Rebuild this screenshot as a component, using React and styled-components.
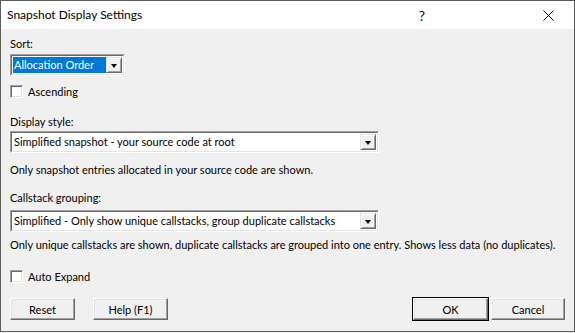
import React from "react";
import styled, { createGlobalStyle } from "styled-components";

const Global = createGlobalStyle`
  html, body { margin: 0; padding: 0; background: #f0f0f0; }
  body { font-family: Lato, "Noto Sans", sans-serif; }
`;

const Win = styled.div`
  width: 575px;
  height: 332px;
  box-sizing: border-box;
  border: 1px solid #5b5b5b;
  background: #f0f0f0;
  display: flex;
  flex-direction: column;
  font-family: Lato, "Noto Sans", sans-serif;
  font-size: 11px;
  color: #000;
`;

const TitleBar = styled.div`
  height: 28px;
  background: #fff;
  display: flex;
  align-items: center;
  padding-left: 6px;
  flex: none;
`;

const Title = styled.div`
  font-size: 12px;
  flex: 1;
  margin-top: -1px;
`;

const TitleBtn = styled.div`
  width: ${p => p.$w}px;
  margin-right: ${p => p.$mr || 0}px;
  height: 28px;
  display: flex;
  align-items: center;
  justify-content: center;
  font-size: 14px;
`;

const Body = styled.div`
  flex: 1;
  display: flex;
  flex-direction: column;
  padding: 0 9px;
`;

const Label = styled.div`
  height: 15px;
  line-height: 15px;
  margin-top: ${p => p.$mt}px;
  white-space: nowrap;
`;

const Combo = styled.div`
  margin-top: ${p => p.$mt}px;
  width: ${p => p.$w}px;
  height: 22px;
  box-sizing: border-box;
  border-top: 1px solid #a0a0a0;
  border-left: 1px solid #a0a0a0;
  border-right: 1px solid #fff;
  border-bottom: 1px solid #fff;
  display: flex;
`;

const ComboInner = styled.div`
  flex: 1;
  display: flex;
  border-top: 1px solid #696969;
  border-left: 1px solid #696969;
  border-right: 1px solid #e3e3e3;
  border-bottom: 1px solid #e3e3e3;
  background: #fff;
  padding: 1px;
  min-width: 0;
`;

const ComboText = styled.div`
  flex: 1;
  line-height: 16px;
  padding-left: 1px;
  white-space: nowrap;
  overflow: hidden;
  background: ${p => (p.$sel ? "#0078d7" : "transparent")};
  color: ${p => (p.$sel ? "#fff" : "#000")};
`;

const ArrowBtn = styled.div`
  width: 16px;
  flex: none;
  box-sizing: border-box;
  background: #f0f0f0;
  border-top: 1px solid #e3e3e3;
  border-left: 1px solid #e3e3e3;
  border-right: 1px solid #696969;
  border-bottom: 1px solid #696969;
  box-shadow: inset 1px 1px 0 #fff, inset -1px -1px 0 #a0a0a0;
  display: flex;
  align-items: center;
  justify-content: center;
`;

const Tri = styled.div`
  width: 0;
  height: 0;
  border-left: 3.5px solid transparent;
  border-right: 3.5px solid transparent;
  border-top: 4px solid #000;
  margin-top: 1px;
`;

const CheckRow = styled.div`
  display: flex;
  align-items: center;
  gap: 5px;
  margin-top: ${p => p.$mt}px;
  height: 15px;
`;

const Box = styled.div`
  width: 13px;
  height: 13px;
  box-sizing: border-box;
  background: #fff;
  border: 1px solid;
  border-color: #a0a0a0 #fff #fff #a0a0a0;
  box-shadow: inset 1px 1px 0 #696969, inset -1px -1px 0 #e3e3e3;
`;

const ButtonRow = styled.div`
  display: flex;
  margin-top: ${p => p.$mt}px;
  align-items: flex-start;
`;

const Btn = styled.div`
  width: ${p => p.$w}px;
  height: 22px;
  box-sizing: border-box;
  margin-right: ${p => p.$mr || 0}px;
  background: #f0f0f0;
  border-top: 1px solid #fff;
  border-left: 1px solid #fff;
  border-right: 1px solid #696969;
  border-bottom: 1px solid #696969;
  box-shadow: inset -1px -1px 0 #a0a0a0, inset 1px 1px 0 #e3e3e3;
  outline: ${p => (p.$def ? "1px solid #000" : "none")};
  display: flex;
  align-items: center;
  justify-content: center;
  line-height: 15px;
`;

const Spacer = styled.div`
  flex: 1;
`;

function ComboBox({ w, mt, text, sel }) {
  return (
    <Combo $w={w} $mt={mt}>
      <ComboInner>
        <ComboText $sel={sel}>{text}</ComboText>
        <ArrowBtn>
          <Tri />
        </ArrowBtn>
      </ComboInner>
    </Combo>
  );
}

export default function App() {
  return (
    <>
      <Global />
      <Win>
        <TitleBar>
          <Title>Snapshot Display Settings</Title>
          <TitleBtn $w={30} $mr={96}>?</TitleBtn>
          <TitleBtn $w={30} $mr={11}>
            <svg width="11" height="11" viewBox="0 0 11 11">
              <path d="M0.5 0.5 L10.5 10.5 M10.5 0.5 L0.5 10.5" stroke="#000" strokeWidth="1" fill="none" />
            </svg>
          </TitleBtn>
        </TitleBar>
        <Body>
          <Label $mt={7}>Sort:</Label>
          <ComboBox w={115} mt={3} text="Allocation Order" sel />
          <CheckRow $mt={8}>
            <Box />
            <span>Ascending</span>
          </CheckRow>
          <Label $mt={15}>Display style:</Label>
          <ComboBox w={369} mt={2} text="Simplified snapshot - your source code at root" />
          <Label $mt={9}>Only snapshot entries allocated in your source code are shown.</Label>
          <Label $mt={13}>Callstack grouping:</Label>
          <ComboBox w={369} mt={5} text="Simplified - Only show unique callstacks, group duplicate callstacks" />
          <Label $mt={5}>Only unique callstacks are shown, duplicate callstacks are grouped into one entry. Shows less data (no duplicates).</Label>
          <CheckRow $mt={17}>
            <Box />
            <span>Auto Expand</span>
          </CheckRow>
          <ButtonRow $mt={14}>
            <Btn $w={65} $mr={18}>Reset</Btn>
            <Btn $w={75}>Help (F1)</Btn>
            <Spacer />
            <Btn $w={75} $def $mr={3}>OK</Btn>
            <Btn $w={74} $mr={0}>Cancel</Btn>
          </ButtonRow>
        </Body>
      </Win>
    </>
  );
}
